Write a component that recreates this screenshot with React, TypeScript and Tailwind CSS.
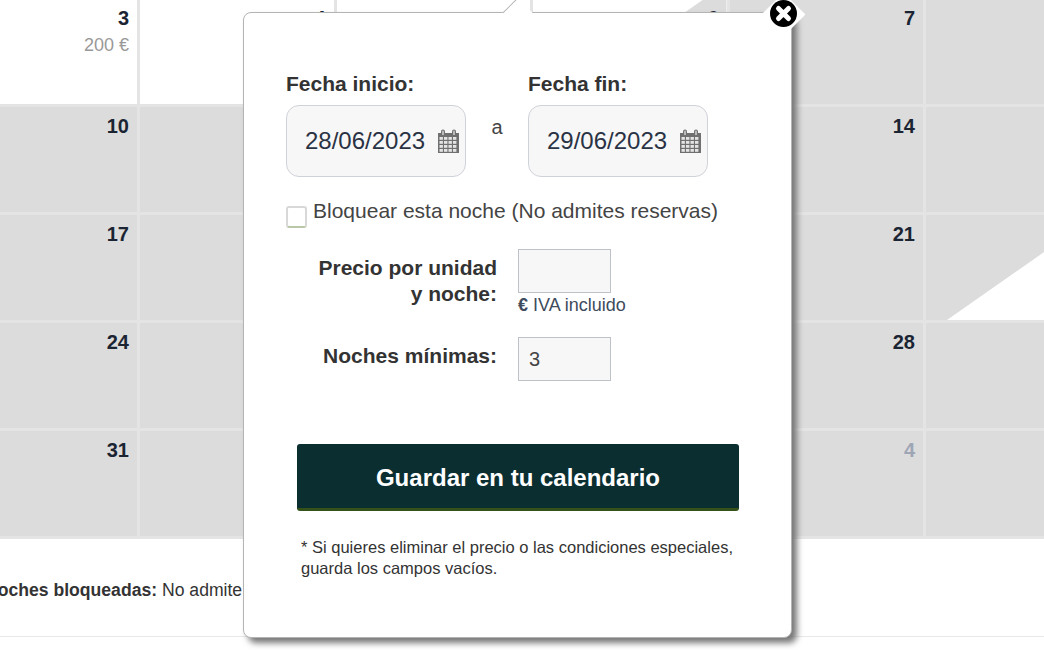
// ── Data ──────────────────────────────────
const rows = [
  [3, 4, 5, 6, 7, 8],
  [10, 11, 12, 13, 14, 15],
  [17, 18, 19, 20, 21, 22],
  [24, 25, 26, 27, 28, 29],
  [31, 1, 2, 3, 4, 5],
]

// ── Sub-components ────────────────────────
function CalendarIcon() {
  return (
    <svg width="21" height="24" viewBox="0 0 21 24" className="shrink-0">
      <path d="M0 4h3V2.5a2 2 0 0 1 4 0V4h7V2.5a2 2 0 0 1 4 0V4h3v20H0z" fill="#707070" />
      <path d="M4 2.5a1 1 0 0 1 2 0V6H4zM15 2.5a1 1 0 0 1 2 0V6h-2z" fill="#bbb" />
      {[8, 12, 16, 20].map((y) =>
        [1.5, 6, 10.5, 15].map((x) => (
          <rect key={`${x}-${y}`} x={x} y={y} width="3.4" height="2.8" fill="#e4e4e4" />
        )),
      )}
    </svg>
  )
}

function CloseIcon() {
  return (
    <svg width="27" height="27" viewBox="0 0 27 27" className="absolute top-[-13px] left-[526px]">
      <circle cx="13.5" cy="13.5" r="13.5" fill="#000" />
      <path d="M8.5 8.5l10 10M18.5 8.5l-10 10" stroke="#fff" strokeWidth="5" strokeLinecap="round" />
    </svg>
  )
}

function DayCell({ day, row, col }: { day: number; row: number; col: number }) {
  const isWhite = row === 0 && col < 4
  const isMuted = row === 4 && col > 0
  return (
    <div className={`relative h-[105px] pt-[9px] pr-2 text-right ${isWhite ? 'bg-white' : 'bg-[#dcdcdc]'}`}>
      {row === 0 && col === 3 && (
        <div className="absolute inset-0 bg-[#dcdcdc] [clip-path:polygon(171px_0,100%_0,100%_100%,21px_100%)]" />
      )}
      {row === 2 && col === 5 && (
        <div className="absolute inset-0 bg-white [clip-path:polygon(171px_0,100%_0,100%_100%,21px_100%)]" />
      )}
      <div className={`relative text-[20px] leading-5 font-bold ${isMuted ? 'text-[#9ea6b6]' : 'text-[#1b2433]'}`}>
        {day}
      </div>
      {row === 0 && col === 0 && <div className="relative mt-[7px] text-[18px] leading-5 text-[#999]">200 €</div>}
    </div>
  )
}

function DateField({ label, value }: { label: string; value: string }) {
  return (
    <div className="w-[180px]">
      <div className="text-[21px] leading-6 font-bold text-[#333]">{label}</div>
      <div className="mt-[9px] flex h-[72px] items-center justify-between rounded-[13px] border border-[#d0d2da] bg-[#f7f7f7] pr-[6px] pl-[18px]">
        <span className="text-2xl text-[#2a3344]">{value}</span>
        <CalendarIcon />
      </div>
    </div>
  )
}

// ── Page ──────────────────────────────────
export default function App() {
  return (
    <div className="relative h-[650px] w-[1044px] overflow-hidden bg-white font-['Liberation_Sans',Arial,sans-serif]">
      {/* Calendar */}
      <div className="mt-[-1px] ml-[-56.5px] grid w-[1176px] grid-cols-[repeat(6,193.5px)] gap-[3px] bg-[#e4e4e4] pb-[3px]">
        {rows.map((days, row) =>
          days.map((day, col) => <DayCell key={`${row}-${col}`} day={day} row={row} col={col} />),
        )}
      </div>

      {/* Legend */}
      <div className="mt-[39px] ml-[-15px] text-[17.6px] leading-6 whitespace-nowrap text-[#333]">
        <b>Noches bloqueadas:</b> No admite reservas
      </div>
      <div className="mt-[34px] h-px bg-[#e8e8e8]" />

      {/* Popup */}
      <div className="absolute top-3 left-[243px] h-[626px] w-[549px] rounded-lg border border-[#b4b4b4] bg-white pt-[59px] pl-[42px] shadow-[5px_5px_6px_#777]">
        <div className="absolute top-[-11px] left-[263px] h-[21px] w-[21px] rotate-45 border-l border-[#b4b4b4] bg-white" />
        <div className="absolute top-[-14px] left-[524px] h-[31px] w-[31px] rotate-45 bg-white" />
        <CloseIcon />

        <div className="relative flex items-start">
          <DateField label="Fecha inicio:" value="28/06/2023" />
          <div className="w-[62px] pt-[43px] text-center text-[20px] leading-6 text-[#444]">a</div>
          <DateField label="Fecha fin:" value="29/06/2023" />
        </div>

        <div className="mt-[22px] flex items-start">
          <div className="mt-[7px] h-[22px] w-[21px] rounded-[3px] border-2 border-[#d8d8d8] border-b-[#b9c8a9] bg-white" />
          <div className="ml-[6px] text-[21px] leading-6 text-[#444]">Bloquear esta noche (No admites reservas)</div>
        </div>

        <div className="mt-[21px] flex items-start gap-[21px]">
          <div className="w-[211px] pt-[6px] text-right text-[21px] leading-[26px] font-bold text-[#333]">
            Precio por unidad
            <br />y noche:
          </div>
          <div>
            <div className="h-[44px] w-[93px] border border-[#bcc2c8] bg-[#f7f7f7]" />
            <div className="mt-px text-[18px] leading-[22px] text-[#3d4b5c]">
              <b>€</b> IVA incluido
            </div>
          </div>
        </div>

        <div className="mt-[21px] flex items-start gap-[21px]">
          <div className="w-[211px] pt-[6px] text-right text-[21px] leading-[26px] font-bold text-[#333]">
            Noches mínimas:
          </div>
          <div className="flex h-[44px] w-[93px] items-center border border-[#bcc2c8] bg-[#f7f7f7] pl-[10px] text-[20px] text-[#444]">
            3
          </div>
        </div>

        <div className="mt-[63px] ml-[11px] flex h-[67px] w-[442px] items-center justify-center rounded-[3px] border-b-[3px] border-[#35511a] bg-[#0b2e31] pt-[4px] text-2xl font-bold text-white">
          Guardar en tu calendario
        </div>

        <p className="mt-[26px] ml-[15px] text-[16.5px] leading-[21px] text-[#333]">
          * Si quieres eliminar el precio o las condiciones especiales,
          <br />
          guarda los campos vacíos.
        </p>
      </div>
    </div>
  )
}
